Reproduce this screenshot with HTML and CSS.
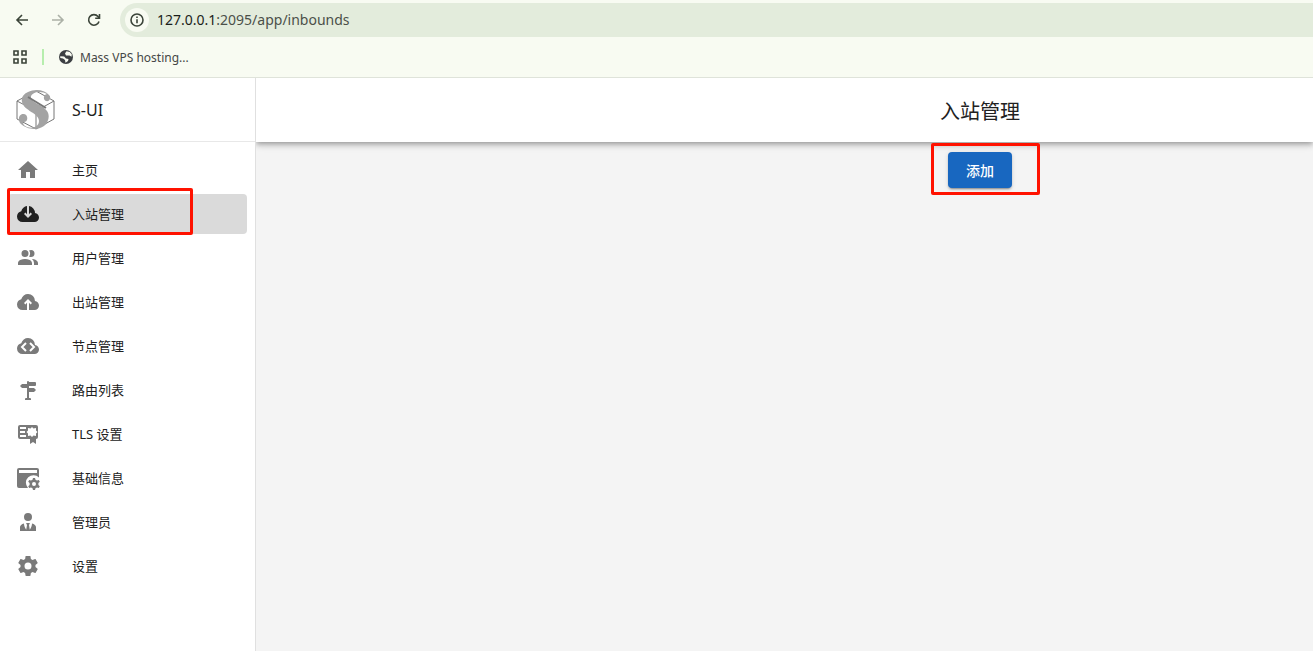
FILE: index.html
```html
<!DOCTYPE html>
<html lang="zh-CN">
<head>
    <meta charset="UTF-8">
    <meta name="viewport" content="width=device-width, initial-scale=1.0">
    <title>S-UI</title>
    <link rel="stylesheet" href="styles.css">
</head>
<body>
    <header class="browser">
        <div class="toolbar">
            <button class="tool" aria-label="Back">
                <svg viewBox="0 0 16 16"><path d="M14 8H3M8 3L3 8l5 5"/></svg>
            </button>
            <button class="tool disabled" aria-label="Forward" disabled>
                <svg viewBox="0 0 16 16"><path d="M2 8h11M8 3l5 5-5 5"/></svg>
            </button>
            <button class="tool" aria-label="Reload">
                <svg viewBox="0 0 16 16"><path d="M13 9.500A5.300 5.300 0 1 1 12 4.500L13.500 6M13.500 2v4.300H9.200"/></svg>
            </button>
            <div class="address">
                <button class="site-info" aria-label="Site information">
                    <svg viewBox="0 0 16 16"><circle cx="8" cy="8" r="6"/><path d="M8 7.200v4M8 4.500v1.500"/></svg>
                </button>
                <a class="url" href="#"><b>127.0.0.1</b>:2095/app/inbounds</a>
            </div>
        </div>
        <nav class="bookmarks">
            <button class="apps" aria-label="Apps">
                <svg viewBox="0 0 16 16"><path d="M2 2h4v4H2zM10 2h4v4h-4zM2 10h4v4H2zM10 10h4v4h-4z"/></svg>
            </button>
            <span class="divider"></span>
            <a class="bookmark" href="#">
                <svg viewBox="0 0 16 16"><circle cx="8" cy="8" r="7"/><path class="land" d="M8.500 2.300L7 4.500 8 6.500h3.500l2 1.200.3-2.500-2-2.200zM2.200 7.200l4 .3 1.800 2 2.500.5-.5 2-2.500 1.800-.5-2.800-2-1.500-2.700-.5z"/></svg>
                Mass VPS hosting...
            </a>
        </nav>
    </header>

    <div class="app">
        <aside class="sidebar">
            <a class="brand" href="#">
                <svg viewBox="0 0 40 40">
                    <path class="cube" d="M1 11L20 1l18 10v18L20 39 1 29zM1 11l19 10 18-10M20 21v18"/>
                    <path class="letter" d="M30 11C33 12 36 8 33 5 28-1 18-1 12 2 7 4 5 8 6 12c2 9 17 11 17 19 0 6-7 8-12 6-3-1-4-3-4-5 5 1 6-7 1-8-5-1-7 6-3 10 5 5 16 7 23 2 5-4 6-11 3-15-4-6-15-8-16-13-1-6 10-8 16-4-4 1-4 6-1 7z"/>
                    <path class="fold" d="M12 7l18 11"/>
                </svg>
                <span>S-UI</span>
            </a>
            <nav class="menu">
                <a href="#"><svg viewBox="0 0 24 24"><path d="M10,20V14H14V20H19V12H22L12,3L2,12H5V20H10Z"/></svg><span class="label">主页</span></a>
                <a href="#" class="active"><svg viewBox="0 0 24 24"><path d="M6.500 20Q4.220 20 2.610 18.430 1 16.850 1 14.580 1 12.630 2.170 11.100 3.350 9.570 5.250 9.150 5.830 7.130 7.390 5.750 8.950 4.380 11 4.080V12.150L9.400 10.600L8 12L12 16L16 12L14.600 10.600L13 12.150V4.080Q15.580 4.430 17.290 6.390 19 8.350 19 11 20.730 11.200 21.860 12.500 23 13.780 23 15.500 23 17.380 21.690 18.690 20.380 20 18.500 20Z"/></svg><span class="label">入站管理</span><span class="mark"></span></a>
                <a href="#"><svg viewBox="0 0 24 24"><path d="M16 17V19H2V17S2 13 9 13 16 17 16 17M12.500 7.500A3.500 3.500 0 1 0 9 11A3.500 3.500 0 0 0 12.500 7.500M15.940 13A5.320 5.320 0 0 1 18 17V19H22V17S22 13.370 15.940 13M15 4A3.390 3.390 0 0 0 13.070 4.590A5 5 0 0 1 13.070 10.410A3.390 3.390 0 0 0 15 11A3.500 3.500 0 0 0 15 4Z"/></svg><span class="label">用户管理</span></a>
                <a href="#"><svg viewBox="0 0 24 24"><path d="M11 20H6.500Q4.220 20 2.610 18.430 1 16.850 1 14.580 1 12.630 2.170 11.100 3.350 9.570 5.250 9.150 5.880 6.850 7.750 5.430 9.630 4 12 4 14.930 4 16.960 6.040 19 8.070 19 11 20.730 11.200 21.860 12.500 23 13.780 23 15.500 23 17.380 21.690 18.690 20.380 20 18.500 20H13V12.850L14.600 14.400L16 13L12 9L8 13L9.400 14.400L11 12.850Z"/></svg><span class="label">出站管理</span></a>
                <a href="#"><svg viewBox="0 0 24 24"><path d="M18.500 20H6.500Q4.220 20 2.610 18.430 1 16.850 1 14.580 1 12.630 2.170 11.100 3.350 9.570 5.250 9.150 5.880 6.850 7.750 5.430 9.630 4 12 4 14.930 4 16.960 6.040 19 8.070 19 11 20.730 11.200 21.860 12.500 23 13.780 23 15.500 23 17.380 21.690 18.690 20.380 20 18.500 20Z"/><path class="cut" d="M10 9l-4 4 4 4M14 9l4 4-4 4"/></svg><span class="label">节点管理</span></a>
                <a href="#"><svg viewBox="0 0 24 24"><path d="M11 4a1 1 0 0 1 2 0h6a1 1 0 0 1 1 1v2a1 1 0 0 1-1 1h-6v2h5l2 2-2 2h-5v6h1a1 1 0 0 1 1 1v1H9v-1a1 1 0 0 1 1-1h1V10H6L4 8l2-2h5z"/></svg><span class="label">路由列表</span></a>
                <a href="#"><svg viewBox="0 0 24 24"><path d="M4 3h16a2 2 0 0 1 2 2v10a2 2 0 0 1-2 2v5l-3-2-3 2v-5H4a2 2 0 0 1-2-2V5a2 2 0 0 1 2-2z"/><path class="hole" d="M4 5h6v2H4zM4 9h5v2H4zM4 13h6v2H4zM16 5l1.500 1.500L20 6v2.500l1.500 1.500-1.500 1.500V14l-2.500-.5L16 15l-1.500-1.500L12 14v-2.500L10.500 10 12 8.500V6l2.500.5z"/></svg><span class="label">TLS 设置</span></a>
                <a href="#"><svg viewBox="0 0 24 24"><path d="M3 2h18a2 2 0 0 1 2 2v7.500A7 7 0 0 0 12 22H3a2 2 0 0 1-2-2V4a2 2 0 0 1 2-2z"/><path class="hole" d="M3 4h18v3H3z"/><path transform="translate(12 12)" d="M5 0h2l.5 1.800 1.500.8 1.800-.6 1 1.800L10.400 5v2l1.400 1.200-1 1.800-1.800-.6-1.500.8L7 12H5l-.5-1.800L3 9.400l-1.800.6-1-1.800L1.600 7V5L.2 3.800l1-1.800 1.800.6 1.500-.8z"/><circle class="hole" cx="18" cy="18" r="2"/></svg><span class="label">基础信息</span></a>
                <a href="#"><svg viewBox="0 0 24 24"><path d="M12 3A4 4 0 1 0 16 7A4 4 0 0 0 12 3M16 13.540C16 14.600 15.720 17.070 13.810 19.830L13 15L13.940 13.120C13.320 13.050 12.670 13 12 13S10.680 13.050 10.060 13.120L11 15L10.190 19.830C8.280 17.070 8 14.600 8 13.540C5.610 14.240 4 15.500 4 17V21H20V17C20 15.500 18.400 14.240 16 13.540Z"/></svg><span class="label">管理员</span></a>
                <a href="#"><svg viewBox="0 0 24 24"><path d="M12,15.500A3.500,3.500 0 0,1 8.500,12A3.500,3.500 0 0,1 12,8.500A3.500,3.500 0 0,1 15.500,12A3.500,3.500 0 0,1 12,15.500M19.430,12.970C19.470,12.650 19.500,12.330 19.500,12C19.500,11.670 19.470,11.340 19.430,11L21.540,9.370C21.730,9.220 21.780,8.950 21.660,8.730L19.660,5.270C19.540,5.050 19.270,4.960 19.050,5.050L16.560,6.050C16.040,5.660 15.500,5.320 14.870,5.070L14.500,2.420C14.460,2.180 14.250,2 14,2H10C9.750,2 9.540,2.180 9.500,2.420L9.130,5.070C8.500,5.320 7.960,5.660 7.440,6.050L4.950,5.050C4.730,4.960 4.460,5.050 4.340,5.270L2.340,8.730C2.210,8.950 2.270,9.220 2.460,9.370L4.570,11C4.530,11.340 4.500,11.670 4.500,12C4.500,12.330 4.530,12.650 4.570,12.970L2.460,14.630C2.270,14.780 2.210,15.050 2.340,15.270L4.340,18.730C4.460,18.950 4.730,19.030 4.950,18.950L7.440,17.940C7.960,18.340 8.500,18.680 9.130,18.930L9.500,21.580C9.540,21.820 9.750,22 10,22H14C14.250,22 14.460,21.820 14.500,21.580L14.870,18.930C15.500,18.670 16.040,18.340 16.560,17.940L19.050,18.950C19.270,19.030 19.540,18.950 19.660,18.730L21.660,15.270C21.780,15.050 21.730,14.780 21.540,14.630L19.430,12.970Z"/></svg><span class="label">设置</span></a>
            </nav>
        </aside>

        <main class="main">
            <header class="title-bar">
                <h1>入站管理</h1>
            </header>
            <section class="content">
                <div class="action">
                    <button class="add">添加</button>
                    <span class="mark"></span>
                </div>
            </section>
        </main>
    </div>
</body>
</html>
```
FILE: styles.css
```css
* {
    box-sizing: border-box;
}

body {
    margin: 0;
    min-height: 100vh;
    display: flex;
    flex-direction: column;
    font-family: "Noto Sans", "Noto Sans CJK SC", sans-serif;
    color: #212121;
    background: #fff;
}

a {
    color: inherit;
    text-decoration: none;
}

button {
    padding: 0;
    border: none;
    background: none;
    font-family: inherit;
    cursor: pointer;
}

svg {
    display: block;
    flex: none;
}

/* Browser bars */
.browser {
    height: 78px;
    background: #f8fbf2;
    border-bottom: 1px solid #dfe3da;
}

.toolbar {
    display: flex;
    align-items: center;
    gap: 20px;
    padding: 3px 0 0 14px;
}

.tool svg,
.site-info svg,
.apps svg {
    width: 16px;
    height: 16px;
    fill: none;
    stroke: #3b4439;
    stroke-width: 1.6;
}

.tool.disabled svg {
    stroke: #acb1a7;
}

.address {
    flex: 1;
    display: flex;
    align-items: center;
    gap: 8px;
    height: 34px;
    margin-left: -2px;
    padding-left: 5px;
    border-radius: 17px 0 0 17px;
    background: #e3ecdc;
}

.site-info {
    display: flex;
    align-items: center;
    justify-content: center;
    width: 24px;
    height: 24px;
    border-radius: 50%;
    background: #f8fbf2;
}

.url {
    padding-bottom: 2px;
    font-size: 14px;
    color: #4b5049;
}

.url b {
    font-weight: normal;
    color: #1b1e1a;
}

.bookmarks {
    display: flex;
    align-items: center;
    gap: 14px;
    height: 40px;
    padding-left: 12px;
}

.divider {
    width: 2px;
    height: 16px;
    background: #b7eeae;
}

.bookmark {
    display: flex;
    align-items: center;
    gap: 6px;
    font-size: 12px;
    color: #454746;
}

.bookmark svg {
    width: 16px;
    height: 16px;
    fill: #3c3f43;
}

.bookmark .land {
    fill: #f8fbf2;
}

/* App layout */
.app {
    flex: 1;
    display: flex;
}

.sidebar {
    width: 256px;
    border-right: 1px solid #e0e0e0;
    background: #fff;
}

.brand {
    display: flex;
    align-items: center;
    gap: 16px;
    height: 64px;
    padding-left: 16px;
    border-bottom: 1px solid #e8e8e8;
    font-size: 16px;
}

.brand svg {
    width: 40px;
    height: 40px;
}

.cube {
    fill: none;
    stroke: #777;
}

.letter {
    fill: #a3a3a3;
}

.fold {
    stroke: #777;
    stroke-width: 2;
}

.menu {
    display: flex;
    flex-direction: column;
    gap: 4px;
    padding: 8px;
}

.menu a {
    position: relative;
    display: flex;
    align-items: center;
    gap: 32px;
    height: 40px;
    padding-left: 8px;
    border-radius: 4px;
    font-size: 13px;
}

.menu .label {
    padding-bottom: 2px;
}

.menu svg {
    width: 24px;
    height: 24px;
    fill: #7a7a7a;
}

.menu .hole {
    fill: #fff;
}

.menu .cut {
    fill: none;
    stroke: #fff;
    stroke-width: 2;
}

.menu .active {
    background: #dadada;
}

.menu .active svg {
    fill: #212121;
}

.main {
    flex: 1;
    overflow: hidden;
    background: #f4f4f4;
}

.title-bar,
.content {
    display: flex;
    justify-content: center;
    padding-left: 37%;
}

.title-bar {
    align-items: center;
    height: 64px;
    background: #fff;
    box-shadow: 0 2px 4px -1px rgba(0, 0, 0, 0.2), 0 4px 5px rgba(0, 0, 0, 0.14), 0 1px 10px rgba(0, 0, 0, 0.12);
}

h1 {
    margin: 0;
    font-size: 20px;
    font-weight: normal;
}

.content {
    padding-top: 10px;
}

.action {
    position: relative;
}

.add {
    width: 64px;
    height: 36px;
    border-radius: 4px;
    background: #1867c0;
    color: #fff;
    font-size: 14px;
    font-weight: 500;
    box-shadow: 0 3px 1px -2px rgba(0, 0, 0, 0.2), 0 2px 2px rgba(0, 0, 0, 0.14), 0 1px 5px rgba(0, 0, 0, 0.12);
}

/* Red highlight frames */
.mark {
    position: absolute;
    border: 3px solid #ff1200;
    border-radius: 2px;
    pointer-events: none;
}

.active .mark {
    top: -6px;
    left: -1px;
    width: 186px;
    height: 47px;
}

.action .mark {
    top: -9px;
    left: -17px;
    width: 109px;
    height: 52px;
}
```
